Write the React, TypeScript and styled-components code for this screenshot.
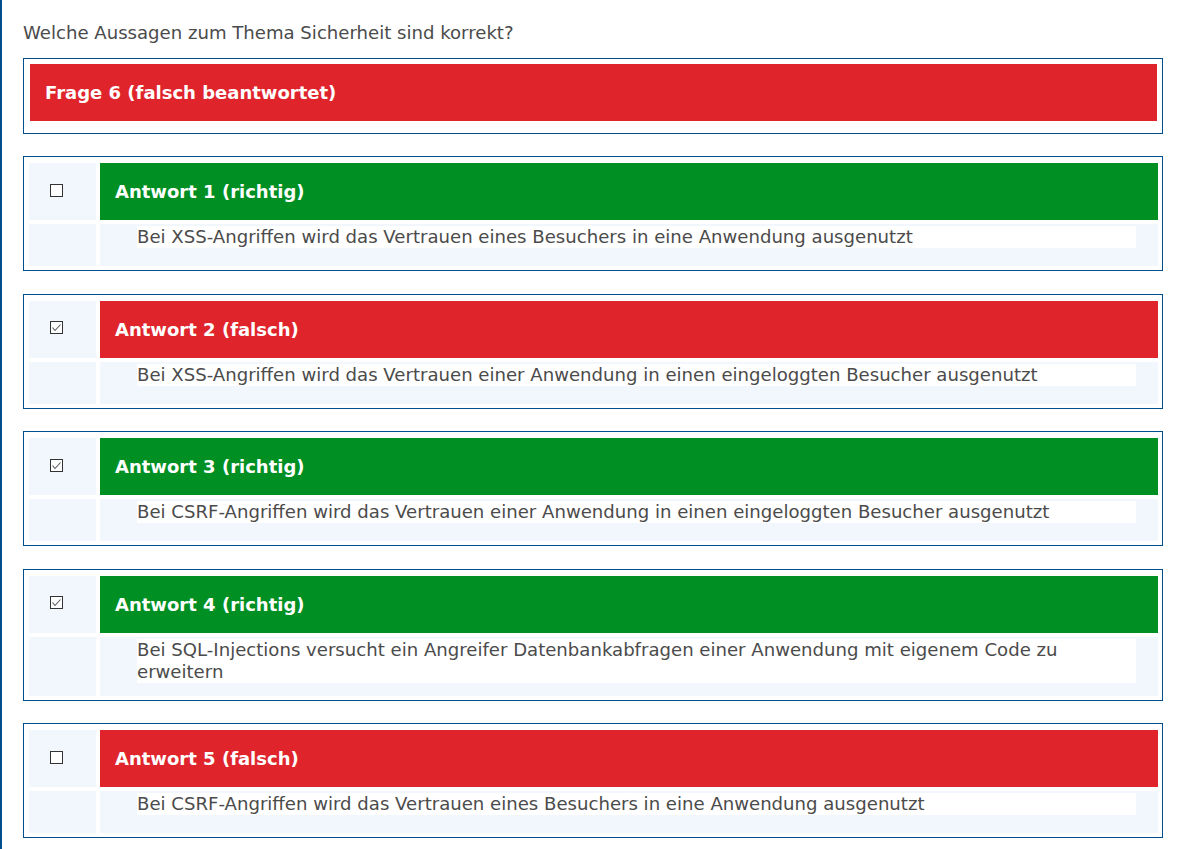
import React from "react";
import styled, { createGlobalStyle } from "styled-components";

const GlobalStyle = createGlobalStyle`
  html, body { margin: 0; padding: 0; background: #ffffff; }
  body { font-family: "DejaVu Sans", Verdana, sans-serif; }
`;

const BLUE = "#00508f";
const RED = "#e0242c";
const GREEN = "#008f22";
const CELL = "#f2f7fe";
const TEXT = "#4b4b4b";

const Page = styled.div`
  min-height: 100vh;
  box-sizing: border-box;
  border-left: 2px solid ${BLUE};
  padding: 22px 37px 12px 21px;
`;

const Question = styled.div`
  font-size: 18.1px;
  line-height: 22px;
  color: ${TEXT};
  margin-bottom: 14px;
`;

const QuestionBox = styled.div`
  width: 1140px;
  box-sizing: border-box;
  border: 1px solid ${BLUE};
  padding: 5px 5px 12px 6px;
  margin-bottom: 22px;
`;

const Bar = styled.div<{ $ok: boolean }>`
  height: 57px;
  display: flex;
  align-items: center;
  padding-left: 15px;
  background: ${(p) => (p.$ok ? GREEN : RED)};
  color: #ffffff;
  font-weight: bold;
  font-size: 18px;
`;

const AnswerBox = styled.div`
  width: 1140px;
  box-sizing: border-box;
  border: 1px solid ${BLUE};
  padding: 6px 4px 4px 5px;
  margin-bottom: 22.5px;
  display: grid;
  grid-template-columns: 67px 1fr;
  grid-template-rows: 57px auto;
  gap: 4px;
`;

const CheckCell = styled.div`
  background: ${CELL};
  display: flex;
  align-items: center;
  padding: 0 0 3px 21px;
`;

const EmptyCell = styled.div`
  background: ${CELL};
`;

const BodyCell = styled.div`
  background: ${CELL};
  min-height: 42px;
  box-sizing: border-box;
  padding: 2px 22px 13px 37px;
`;

const BodyText = styled.div`
  background: #ffffff;
  font-size: 18.1px;
  line-height: 22px;
  color: ${TEXT};
`;

const Box = styled.span`
  width: 13px;
  height: 13px;
  box-sizing: border-box;
  border: 1px solid #333333;
  background: #ffffff;
  display: block;

  svg {
    display: block;
  }
`;

const Check = ({ checked }: { checked: boolean }) => (
  <Box>
    {checked && (
      <svg width="11" height="11" viewBox="0 0 11 11">
        <polyline
          points="1.5,5.5 4,8.5 9.5,2.5"
          fill="none"
          stroke="#5a5a5a"
          strokeWidth="1.1"
        />
      </svg>
    )}
  </Box>
);

const answers = [
  {
    n: 1,
    ok: true,
    checked: false,
    text: "Bei XSS-Angriffen wird das Vertrauen eines Besuchers in eine Anwendung ausgenutzt",
  },
  {
    n: 2,
    ok: false,
    checked: true,
    text: "Bei XSS-Angriffen wird das Vertrauen einer Anwendung in einen eingeloggten Besucher ausgenutzt",
  },
  {
    n: 3,
    ok: true,
    checked: true,
    text: "Bei CSRF-Angriffen wird das Vertrauen einer Anwendung in einen eingeloggten Besucher ausgenutzt",
  },
  {
    n: 4,
    ok: true,
    checked: true,
    text: "Bei SQL-Injections versucht ein Angreifer Datenbankabfragen einer Anwendung mit eigenem Code zu erweitern",
  },
  {
    n: 5,
    ok: false,
    checked: false,
    text: "Bei CSRF-Angriffen wird das Vertrauen eines Besuchers in eine Anwendung ausgenutzt",
  },
];

export default function App() {
  return (
    <>
      <GlobalStyle />
      <Page>
        <Question>Welche Aussagen zum Thema Sicherheit sind korrekt?</Question>
        <QuestionBox>
          <Bar $ok={false}>Frage 6 (falsch beantwortet)</Bar>
        </QuestionBox>
        {answers.map((a) => (
          <AnswerBox key={a.n}>
            <CheckCell>
              <Check checked={a.checked} />
            </CheckCell>
            <Bar $ok={a.ok}>
              Antwort {a.n} ({a.ok ? "richtig" : "falsch"})
            </Bar>
            <EmptyCell />
            <BodyCell>
              <BodyText>{a.text}</BodyText>
            </BodyCell>
          </AnswerBox>
        ))}
      </Page>
    </>
  );
}
